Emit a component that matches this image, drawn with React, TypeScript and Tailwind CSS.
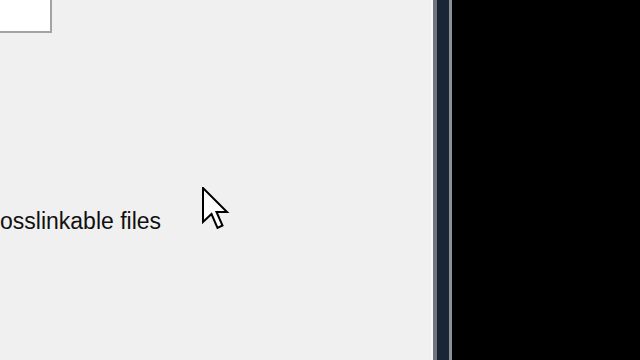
export default function App() {
  return (
    <div className="relative flex h-[360px] w-[640px] overflow-hidden bg-black" style={{ fontFamily: '"Liberation Sans", Arial, sans-serif' }}>
      <div className="flex w-[431px] flex-col bg-[#f0f0f0]">
        <div className="h-[33px] w-[52px] border-b-2 border-r-2 border-[#a3a3a3] bg-white" />
        <div className="mt-[175px] whitespace-nowrap text-[23px] leading-[26px] text-[#111111]">
          osslinkable files
        </div>
      </div>
      <div className="w-[2px] bg-[#f8f8f8]" />
      <div className="w-[4px] bg-[#6f757d]" />
      <div className="w-[12px] bg-[#1a2535]" />
      <div className="w-[3px] bg-[#8b9097]" />
      <div className="flex-1 bg-black" />

      <svg className="absolute left-[202px] top-[187px]" width="28" height="44" viewBox="0 0 28 44">
        <path
          d="M1 1 L1 35 L9.5 27 L15.5 41 L20.5 38.5 L14.5 25 L25 25 Z"
          fill="#ffffff"
          stroke="#000000"
          strokeWidth="2"
          strokeLinejoin="miter"
        />
      </svg>
    </div>
  );
}
